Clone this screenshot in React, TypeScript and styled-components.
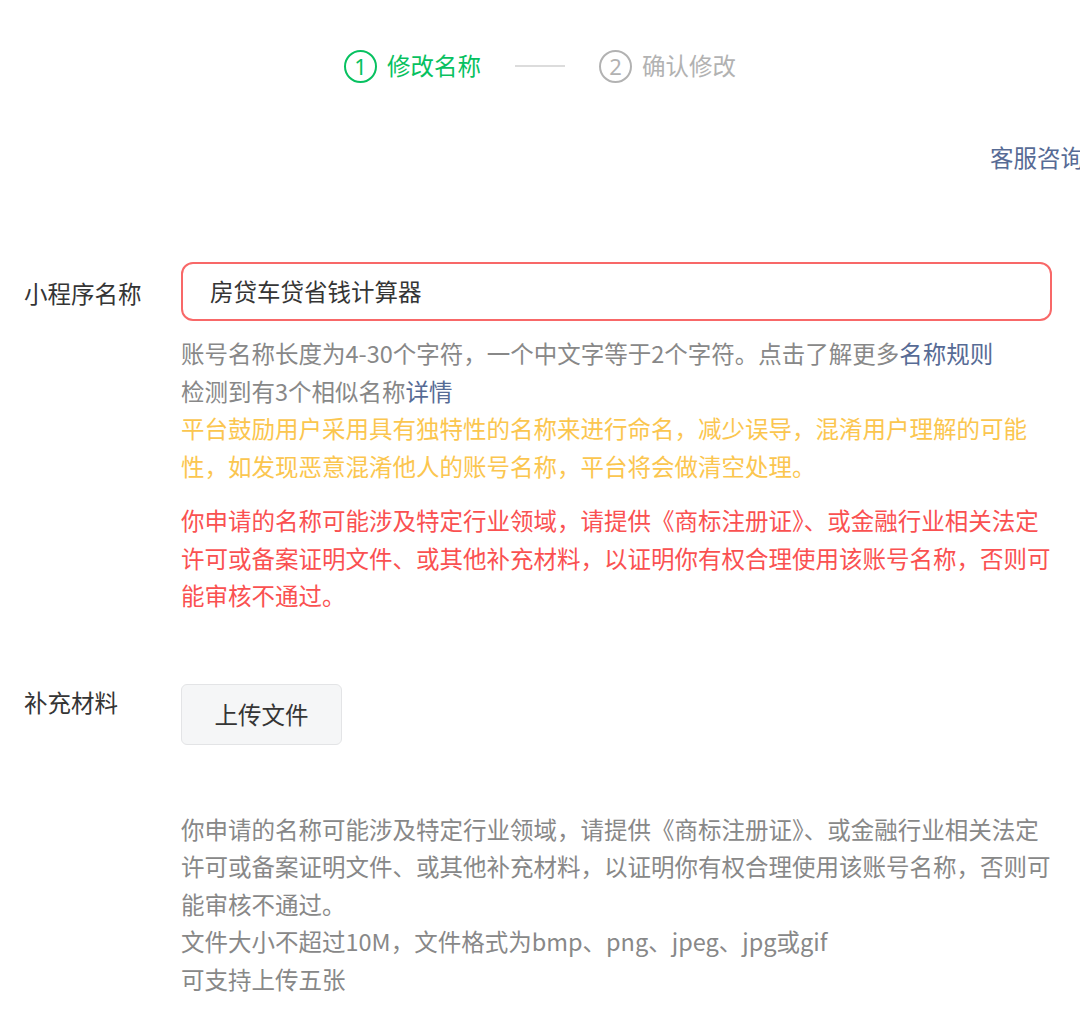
import React from "react";
import styled, { createGlobalStyle } from "styled-components";

const Global = createGlobalStyle`
  html, body {
    margin: 0;
    padding: 0;
    background: #ffffff;
    overflow-x: hidden;
  }
  body {
    font-family: "Noto Sans CJK SC", "Noto Sans", sans-serif;
    color: #353535;
  }
`;

const Page = styled.div`
  width: 1080px;
  box-sizing: border-box;
  padding: 0 0 20px 24px;
  font-size: 23.5px;
  line-height: 37.5px;
`;

const Steps = styled.div`
  display: flex;
  align-items: center;
  justify-content: center;
  height: 132px;
  margin-left: -24px;
  gap: 34px;
`;

const Step = styled.div<{ $active?: boolean }>`
  display: flex;
  align-items: center;
  gap: 10px;
  color: ${(p) => (p.$active ? "#07c160" : "#b2b2b2")};
  font-size: 23.5px;
`;

const StepNum = styled.span<{ $active?: boolean }>`
  width: 29px;
  height: 29px;
  border: 2px solid ${(p) => (p.$active ? "#07c160" : "#b2b2b2")};
  border-radius: 50%;
  display: flex;
  align-items: center;
  justify-content: center;
  font-size: 22px;
  line-height: 1;
  font-family: "Noto Sans", sans-serif;
`;

const StepLine = styled.div`
  width: 50px;
  height: 1.5px;
  background: #dcdcdc;
`;

const ServiceRow = styled.div`
  display: flex;
  justify-content: flex-end;
  margin-right: -4px;
  height: 52px;
  align-items: center;
`;

const ServiceLink = styled.a`
  color: #576b95;
  text-decoration: none;
  white-space: nowrap;
`;

const Form = styled.div`
  display: flex;
  flex-direction: column;
  margin-top: 78px;
`;

const Row = styled.div<{ $gap?: number }>`
  display: grid;
  grid-template-columns: 157px 871px;
  margin-bottom: ${(p) => p.$gap ?? 0}px;
`;

const Label = styled.div<{ $offset?: number }>`
  color: #353535;
  padding-top: ${(p) => p.$offset ?? 0}px;
`;

const Field = styled.div`
  display: flex;
  flex-direction: column;
`;

const Input = styled.div`
  height: 59px;
  box-sizing: border-box;
  border: 2px solid #f86868;
  border-radius: 12px;
  display: flex;
  align-items: center;
  padding-left: 27px;
  color: #353535;
  margin-bottom: 14px;
`;

const Hint = styled.div<{ $tone?: "gray" | "yellow" | "red"; $mt?: number }>`
  color: ${(p) =>
    p.$tone === "yellow" ? "#fbc64f" : p.$tone === "red" ? "#fa5151" : "#888888"};
  margin-top: ${(p) => p.$mt ?? 0}px;
`;

const Link = styled.a`
  color: #576b95;
  text-decoration: none;
`;

const UploadButton = styled.button`
  width: 161px;
  height: 61px;
  box-sizing: border-box;
  background: #f5f6f7;
  border: 1.5px solid #e3e4e6;
  border-radius: 6px;
  font-family: inherit;
  font-size: 23.5px;
  color: #353535;
  cursor: pointer;
  padding: 0;
`;

export default function App() {
  return (
    <>
      <Global />
      <Page>
        <Steps>
          <Step $active>
            <StepNum $active>1</StepNum>
            修改名称
          </Step>
          <StepLine />
          <Step>
            <StepNum>2</StepNum>
            确认修改
          </Step>
        </Steps>
        <ServiceRow>
          <ServiceLink href="#">客服咨询</ServiceLink>
        </ServiceRow>
        <Form>
          <Row $gap={69}>
            <Label $offset={13}>小程序名称</Label>
            <Field>
              <Input>房贷车贷省钱计算器</Input>
              <Hint>
                账号名称长度为4-30个字符，一个中文字等于2个字符。点击了解更多
                <Link href="#">名称规则</Link>
              </Hint>
              <Hint>
                检测到有3个相似名称<Link href="#">详情</Link>
              </Hint>
              <Hint $tone="yellow">
                平台鼓励用户采用具有独特性的名称来进行命名，减少误导，混淆用户理解的可能性，如发现恶意混淆他人的账号名称，平台将会做清空处理。
              </Hint>
              <Hint $tone="red" $mt={17}>
                你申请的名称可能涉及特定行业领域，请提供《商标注册证》、或金融行业相关法定许可或备案证明文件、或其他补充材料，以证明你有权合理使用该账号名称，否则可能审核不通过。
              </Hint>
            </Field>
          </Row>
          <Row $gap={66}>
            <Label>补充材料</Label>
            <Field>
              <UploadButton>上传文件</UploadButton>
            </Field>
          </Row>
          <Row>
            <div />
            <Field>
              <Hint>
                你申请的名称可能涉及特定行业领域，请提供《商标注册证》、或金融行业相关法定许可或备案证明文件、或其他补充材料，以证明你有权合理使用该账号名称，否则可能审核不通过。
              </Hint>
              <Hint>文件大小不超过10M，文件格式为bmp、png、jpeg、jpg或gif</Hint>
              <Hint>可支持上传五张</Hint>
            </Field>
          </Row>
        </Form>
      </Page>
    </>
  );
}
